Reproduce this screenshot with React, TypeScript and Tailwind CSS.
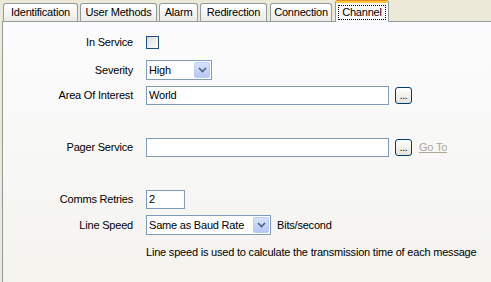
import React from 'react';

const tabs = [
  { name: 'Identification', w: 'w-[75px]', ml: 'ml-0' },
  { name: 'User Methods', w: 'w-[77px]', ml: 'ml-[2px]' },
  { name: 'Alarm', w: 'w-[39px]', ml: 'ml-[2px]' },
  { name: 'Redirection', w: 'w-[67px]', ml: 'ml-[2px]' },
  { name: 'Connection', w: 'w-[62px]', ml: 'ml-[3px]' },
];

function Chevron() {
  return (
    <svg width="9" height="6" viewBox="0 0 9 6">
      <path d="M1 1 L4.5 4.5 L8 1" fill="none" stroke="#4D6185" strokeWidth="1.6" />
    </svg>
  );
}

function Select({ value, width }: { value: string; width: string }) {
  return (
    <div className={`${width} h-[20px] border border-[#7F9DB9] bg-white flex items-center`}>
      <span className="flex-1 pl-[2px] leading-none">{value}</span>
      <div className="w-[16px] h-[16px] mr-[1px] rounded-[2px] border border-[#B9CDF7] bg-gradient-to-b from-[#D7E3FC] to-[#B4C8F5] flex items-center justify-center">
        <Chevron />
      </div>
    </div>
  );
}

function BrowseButton() {
  return (
    <button className="ml-[6px] w-[17px] h-[17px] rounded-[3px] border border-[#003C74] bg-gradient-to-b from-white to-[#E6E3D8] flex items-end justify-center text-[10px] leading-[12px] pb-[1px]">
      ...
    </button>
  );
}

function Row({ label, mt, children }: { label: string; mt: string; children?: React.ReactNode }) {
  return (
    <div className={`flex items-center h-[20px] ${mt}`}>
      <div className="w-[130px] text-right">{label}</div>
      <div className="ml-[13px] flex items-center">{children}</div>
    </div>
  );
}

export default function App() {
  return (
    <div
      className="w-[491px] h-[282px] overflow-hidden bg-[#ECE9D8] text-[11px] tracking-[-0.2px] text-black"
      style={{ fontFamily: '"Liberation Sans", Arial, sans-serif' }}
    >
      {/* Tab strip */}
      <div className="flex items-end h-[21px] pl-[3px]">
        {tabs.map((t) => (
          <div
            key={t.name}
            className={`${t.w} ${t.ml} h-[18px] rounded-t-[3px] border border-b-0 border-[#919B9C] bg-gradient-to-b from-white to-[#ECEBE6] flex items-center justify-center`}
          >
            {t.name}
          </div>
        ))}
        <div className="ml-[3px] w-[54px] h-[22px] -mb-px relative z-10 rounded-t-[3px] border-x border-[#919B9C] bg-[#FCFCFE] flex flex-col">
          <div className="h-[1px] bg-[#E68B2C] rounded-t-[3px]" />
          <div className="h-[2px] bg-[#FFC73C]" />
          <div className="flex-1 flex items-center justify-center">
            <span className="border border-dotted border-black px-[3px] leading-[13px]">Channel</span>
          </div>
        </div>
      </div>

      {/* Panel */}
      <div className="ml-[2px] h-[261px] border-l border-t border-[#919B9C] bg-gradient-to-b from-[#FCFCFE] to-[#F4F3EE] pt-[10px]">
        <Row label="In Service" mt="mt-0">
          <div className="w-[13px] h-[13px] border border-[#1C5180] bg-gradient-to-br from-[#DCDCD7] to-white" />
        </Row>
        <Row label="Severity" mt="mt-[8px]">
          <Select value="High" width="w-[66px]" />
        </Row>
        <Row label="Area Of Interest" mt="mt-[5px]">
          <div className="w-[243px] h-[19px] border border-[#7F9DB9] bg-white pl-[2px] flex items-center">World</div>
          <BrowseButton />
        </Row>
        <Row label="Pager Service" mt="mt-[32px]">
          <div className="w-[243px] h-[19px] border border-[#7F9DB9] bg-white" />
          <BrowseButton />
          <span className="ml-[7px] text-[#ACA899] underline">Go To</span>
        </Row>
        <Row label="Comms Retries" mt="mt-[32px]">
          <div className="w-[39px] h-[19px] border border-[#7F9DB9] bg-white pl-[2px] flex items-center">2</div>
        </Row>
        <Row label="Line Speed" mt="mt-[6px]">
          <Select value="Same as Baud Rate" width="w-[125px]" />
          <span className="ml-[6px]">Bits/second</span>
        </Row>
        <Row label="" mt="mt-[7px]">
          <span>Line speed is used to calculate the transmission time of each message</span>
        </Row>
      </div>
    </div>
  );
}
